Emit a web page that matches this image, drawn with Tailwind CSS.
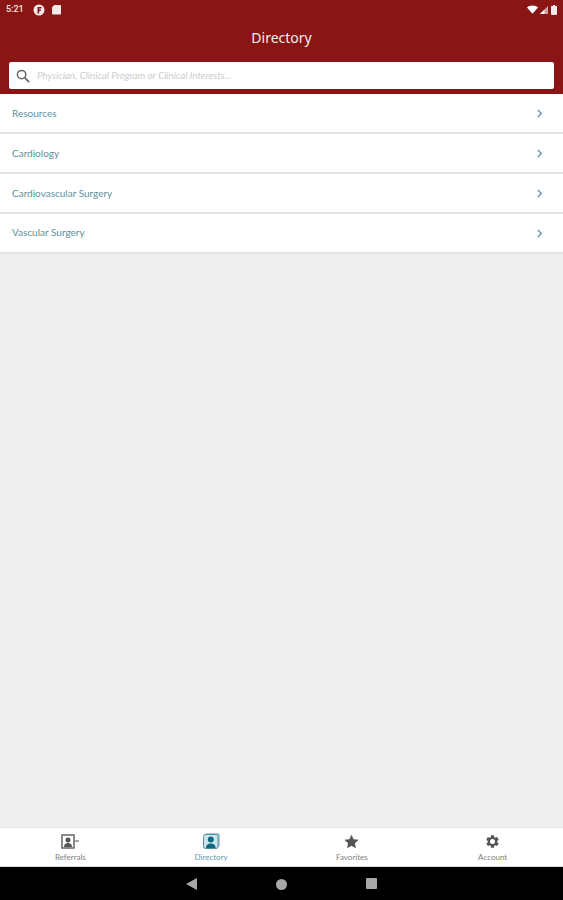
<!DOCTYPE html>
<html lang="en">
<head>
<meta charset="UTF-8">
<title>Directory</title>
<script src="https://cdn.jsdelivr.net/npm/@tailwindcss/browser@4"></script>
</head>
<body class="font-['Lato',sans-serif]">
<div class="flex flex-col w-[563px] h-[900px] bg-[#efefef] overflow-hidden">

  <!-- app bar -->
  <header class="h-[94px] shrink-0 bg-[#8a1515] flex flex-col">
    <div class="h-[18px] flex items-center justify-between pl-[6px] pr-[6px] pt-[1px]">
      <div class="flex items-center">
        <span class="text-[9px] text-white/90 font-['Roboto',sans-serif] font-medium">5:21</span>
        <svg class="ml-[9px]" width="12" height="12" viewBox="0 0 12 12"><circle cx="6" cy="6" r="5.500" fill="#f4eaea"/><path d="M4.500 9.500V3h4v1.600H6.200v1h1.600v1.500H6.200v2.400z" fill="#8a1515"/></svg>
        <svg class="ml-[7px]" width="9" height="11" viewBox="0 0 10 11"><path d="M2.500 0.500H9a1 1 0 0 1 1 1V10a1 1 0 0 1-1 1H1a1 1 0 0 1-1-1V3z" fill="#f4eaea"/></svg>
      </div>
      <div class="flex items-center gap-[2px]">
        <svg width="11" height="9" viewBox="0 0 12 9"><path d="M0 2.200C3.400-.7 8.600-.7 12 2.200L6 9z" fill="#fff"/></svg>
        <svg width="8" height="8" viewBox="0 0 9 9"><path d="M9 0V9H0z" fill="#fff" fill-opacity=".6"/><path d="M5 4V9H0z" fill="#fff"/></svg>
        <svg class="ml-[1px]" width="6" height="10" viewBox="0 0 6 10"><path d="M1.500 1H2V0h2v1h.5A1 1 0 0 1 6 2v7a1 1 0 0 1-1 1H1a1 1 0 0 1-1-1V2a1 1 0 0 1 1.500-1z" fill="#f4eaea"/></svg>
      </div>
    </div>
    <h1 class="mt-[10px] text-center text-white/95 text-[14px] leading-[20px] font-['Noto_Sans',sans-serif]">Directory</h1>
    <div class="mt-[14px] mx-[9px] h-[27px] bg-white rounded-[2px] flex items-center pl-[7px] shadow-[0_0_1px_#5e0c0c]">
      <svg width="14" height="14" viewBox="0 0 15 15" fill="none" stroke="#666" stroke-width="1.600"><circle cx="6" cy="6" r="4.500"/><path d="M9.500 9.500L14 14" stroke-width="2"/></svg>
      <span class="ml-[7px] text-[9.75px] italic text-[#cdcdcd]">Physician, Clinical Program or Clinical Interests...</span>
    </div>
  </header>

  <!-- list -->
  <ul class="shrink-0">
    <li class="h-[40px] bg-white border-b-2 border-[#e4e4e4] flex items-center justify-between pl-[12px] pr-[20px]">
      <span class="text-[10px] text-[#5b919e]">Resources</span>
      <svg width="6" height="9" viewBox="0 0 7 10" fill="none" stroke="#5b90a8" stroke-width="1.500"><path d="M1 1l4 4-4 4"/></svg>
    </li>
    <li class="h-[40px] bg-white border-b-2 border-[#e4e4e4] flex items-center justify-between pl-[12px] pr-[20px]">
      <span class="text-[10px] text-[#5b919e]">Cardiology</span>
      <svg width="6" height="9" viewBox="0 0 7 10" fill="none" stroke="#5b90a8" stroke-width="1.500"><path d="M1 1l4 4-4 4"/></svg>
    </li>
    <li class="h-[40px] bg-white border-b-2 border-[#e4e4e4] flex items-center justify-between pl-[12px] pr-[20px]">
      <span class="text-[10px] text-[#5b919e]">Cardiovascular Surgery</span>
      <svg width="6" height="9" viewBox="0 0 7 10" fill="none" stroke="#5b90a8" stroke-width="1.500"><path d="M1 1l4 4-4 4"/></svg>
    </li>
    <li class="h-[40px] bg-white border-b-2 border-[#e4e4e4] flex items-center justify-between pl-[12px] pr-[20px]">
      <span class="text-[10px] text-[#5b919e] -mt-[1px]">Vascular Surgery</span>
      <svg width="6" height="9" viewBox="0 0 7 10" fill="none" stroke="#5b90a8" stroke-width="1.500"><path d="M1 1l4 4-4 4"/></svg>
    </li>
  </ul>

  <div class="flex-1"></div>

  <!-- tabs -->
  <nav class="h-[40px] shrink-0 bg-white border-t border-b border-t-[#e6e6e6] border-b-[#d8d8d8] grid grid-cols-4">
    <div class="flex flex-col items-center pt-[6px]">
      <svg width="18" height="15" viewBox="0 0 18 15"><path d="M1 1h12v13H1z" fill="none" stroke="#666" stroke-width="1.500"/><circle cx="7" cy="6" r="2.500" fill="#555"/><path d="M3 13c0-3 2-4 4-4s4 1 4 4z" fill="#555"/><path d="M14 7h4" stroke="#888" stroke-width="1.500"/></svg>
      <span class="text-[8px] leading-[10px] mt-[3px] text-[#808080]">Referrals</span>
    </div>
    <div class="flex flex-col items-center pt-[5px]">
      <svg width="17" height="16" viewBox="0 0 17 16"><rect x="2" y="0" width="15" height="14" rx="2" fill="#a9ccd4"/><rect x="0.500" y="1.500" width="14.500" height="14" rx="2" fill="#cfe3e8" stroke="#4c8fa0"/><circle cx="7.800" cy="6.500" r="3" fill="#0e6a80"/><path d="M3 15c0-3.500 2.500-4.500 4.800-4.500s4.800 1 4.800 4.500z" fill="#0e6a80"/></svg>
      <span class="text-[8px] leading-[10px] mt-[3px] text-[#5f9aa9]">Directory</span>
    </div>
    <div class="flex flex-col items-center pt-[6px]">
      <svg width="15" height="15" viewBox="0 0 24 24" fill="#555"><path d="M12 1l3.400 7.300 7.900 1-5.800 5.400 1.500 7.900-7-3.900-7 3.900 1.500-7.900L.7 9.300l7.900-1z"/></svg>
      <span class="text-[8px] leading-[10px] mt-[3px] text-[#808080]">Favorites</span>
    </div>
    <div class="flex flex-col items-center pt-[6px]">
      <svg width="15" height="15" viewBox="0 0 24 24" fill="#555"><path d="M19.400 13c.1-.3.100-.7.100-1s0-.7-.1-1l2.500-1.900-2.400-4.200-3 1.200c-.5-.4-1.100-.7-1.700-1L14.400 2H9.600l-.4 3.100c-.6.300-1.200.6-1.700 1l-3-1.200L2.100 9.100 4.600 11c-.1.300-.1.700-.1 1s0 .7.100 1l-2.500 1.900 2.400 4.200 3-1.200c.5.400 1.100.7 1.700 1l.4 3.100h4.800l.4-3.100c.6-.3 1.200-.6 1.700-1l3 1.200 2.400-4.200zM12 16a4 4 0 1 1 0-8 4 4 0 0 1 0 8z"/></svg>
      <span class="text-[8px] leading-[10px] mt-[3px] text-[#808080]">Account</span>
    </div>
  </nav>

  <!-- android nav bar -->
  <div class="h-[33px] shrink-0 bg-black relative">
    <svg class="absolute left-[186px] top-[11px]" width="11" height="12" viewBox="0 0 11 12"><path d="M11 0v12L0 6z" fill="#a8a8a8"/></svg>
    <div class="absolute left-[276px] top-[12px] w-[11px] h-[11px] rounded-full bg-[#a8a8a8]"></div>
    <div class="absolute left-[366px] top-[11px] w-[11px] h-[11px] rounded-[1px] bg-[#a8a8a8]"></div>
  </div>
</div>
</body>
</html>
